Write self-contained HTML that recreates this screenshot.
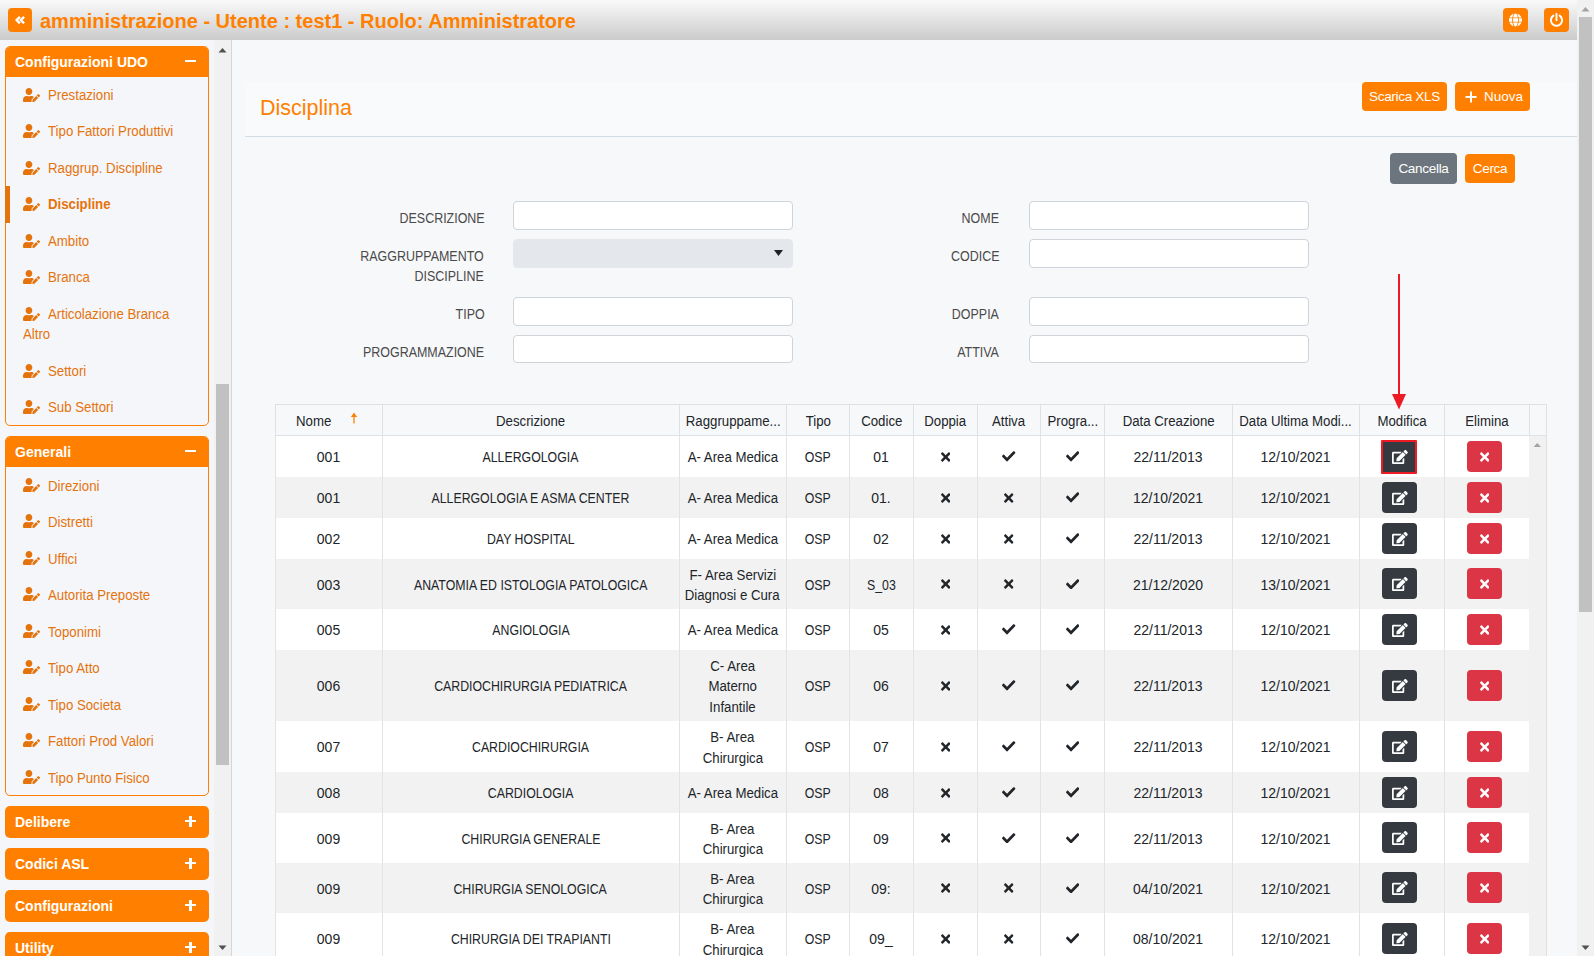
<!DOCTYPE html>
<html><head><meta charset="utf-8">
<style>
*{box-sizing:border-box;margin:0;padding:0}
html,body{width:1594px;height:956px;overflow:hidden;background:#f7f8fa;font-family:"Liberation Sans",sans-serif;color:#212529}
.abs{position:absolute}
svg.abs{display:block}
#hdr{position:absolute;left:0;top:0;width:1577px;height:40px;background:linear-gradient(#fafafa,#cbcbcb)}
.obtn{position:absolute;background:#ff8000;border-radius:4px}
#title{position:absolute;left:40px;top:9px;font-weight:bold;font-size:20px;line-height:24px;color:#ff8000;white-space:nowrap}
#vscroll{position:absolute;left:1577px;top:0;width:17px;height:956px;background:#f1f1f1}
#vthumb{position:absolute;left:2px;top:17px;width:13px;height:595px;background:#c1c1c1}
.arr{position:absolute;display:block}
#side{position:absolute;left:0;top:40px;width:231px;height:916px;background:#f5f6fa}
#sscroll{position:absolute;left:214px;top:40px;width:17px;height:916px;background:#f1f1f1}
#sthumb{position:absolute;left:2px;top:344px;width:13px;height:381px;background:#c1c1c1}
#sline{position:absolute;left:231px;top:40px;width:1px;height:916px;background:#d6d6d6}
.panel{position:absolute;left:5px;width:204px;border:1px solid #ff8000;border-radius:5px;background:#f5f6fa;overflow:hidden}
.ph{position:absolute;left:-1px;top:-1px;width:204px;height:31px;background:#ff8000;color:#fff;font-weight:bold;font-size:14px;line-height:33px;padding-left:10px;white-space:nowrap}
.sg{position:absolute;right:13px;top:14px;width:11px;height:2.4px;background:#fff}
.pl::after{content:"";position:absolute;left:4.3px;top:-4.3px;width:2.4px;height:11px;background:#fff}
.cp{position:absolute;left:5px;width:204px;height:32px;background:#ff8000;border-radius:5px;color:#fff;font-weight:bold;font-size:14px;line-height:33px;padding-left:10px}
.it{position:absolute;left:17px;color:#e5730c;font-size:14px;line-height:20.5px;white-space:nowrap}
.it svg{position:absolute;left:6px;top:2px}
.it span{position:absolute;left:31px;top:0;transform:scaleX(0.945);transform-origin:left top}
.it.act span{font-weight:bold}
#tbox{position:absolute;left:245px;top:82px;width:1332px;height:55px;background:#f9fafb;border-bottom:1px solid #d3dce3}
#dtitle{position:absolute;left:260px;top:94.5px;font-size:22.5px;line-height:26px;color:#ff8000;transform:scaleX(0.955);transform-origin:left top}
.btn{position:absolute;color:#fff;font-size:13.5px;text-align:center;border-radius:4px;white-space:nowrap}
.lbl{position:absolute;color:#4a4a4a;font-size:14px;text-align:right;line-height:20px;white-space:nowrap;transform:scaleX(0.89);transform-origin:right top}
.inp{position:absolute;width:280px;height:29px;background:#fff;border:1px solid #cfd4da;border-radius:4px}
.inp.sel{background:#e4e7eb;border-color:#e4e7eb}
#thead{position:absolute;left:275px;top:404px;width:1272px;height:32px;background:#f7f8fa;border:1px solid #dee2e6;border-top-color:#e0e0e0}
.th{position:absolute;top:405px;height:30px;line-height:32px;text-align:center;font-size:14px;color:#212529;white-space:nowrap;border-left:1px solid #dee2e6}
#tscroll{position:absolute;left:1529px;top:436px;width:18px;height:520px;background:#f1f1f1;border-right:1px solid #e0e0e0}
.td{position:absolute;text-align:center;font-size:14px;line-height:20.25px;color:#212529;white-space:nowrap}
.ebtn{left:1382px;width:35px;height:31px;background:#343a40;border-radius:4px}
.dbtn{left:1467px;width:35px;height:31px;background:#dc3545;border-radius:4px}

</style></head><body>
<div id="hdr"></div>
<div class="obtn" style="left:8px;top:8px;width:24px;height:24px"><svg width="24" height="24" viewBox="0 0 24 24" style="position:absolute;left:0;top:0"><path d="M11.9 8.9L8.6 12.1l3.3 3.2M16.1 8.9L12.8 12.1l3.3 3.2" fill="none" stroke="#fff" stroke-width="2.3"/></svg></div>
<div id="title">amministrazione - Utente : test1 - Ruolo: Amministratore</div>
<div class="obtn" style="left:1503px;top:8px;width:25px;height:24px"><svg width="13" height="14" viewBox="0 0 496 512" style="position:absolute;left:6px;top:5px"><path fill="#fff" d="M336.5 160C322 70.7 287.8 8 248 8s-74 62.7-88.5 152h177zM152 256c0 22.2 1.2 43.5 3.3 64h185.3c2.1-20.5 3.3-41.8 3.3-64s-1.2-43.5-3.3-64H155.3c-2.1 20.5-3.3 41.8-3.3 64zm324.7-96c-28.6-67.9-86.5-120.4-158-141.6 24.4 33.8 41.2 84.7 50 141.6h108zM177.2 18.4C105.8 39.6 47.8 92.1 19.3 160h108c8.7-56.9 25.5-107.8 49.9-141.6zM487.4 192H372.7c2.1 21 3.3 42.5 3.3 64s-1.200 43-3.3 64h114.6c5.5-20.5 8.6-41.8 8.6-64s-3.1-43.5-8.5-64zM120 256c0-21.5 1.2-43 3.3-64H8.6C3.2 212.5 0 233.8 0 256s3.2 43.5 8.6 64h114.6c-2-21-3.2-42.5-3.2-64zm39.5 96c14.5 89.3 48.7 152 88.5 152s74-62.7 88.5-152h-177zm159.3 141.6c71.4-21.2 129.4-73.7 158-141.6h-108c-8.8 56.9-25.6 107.8-50 141.6zM19.3 352c28.6 67.9 86.5 120.4 158 141.6-24.4-33.8-41.2-84.7-50-141.6h-108z"/></svg></div>
<div class="obtn" style="left:1544px;top:8px;width:25px;height:24px"><svg width="25" height="24" viewBox="0 0 25 24" style="position:absolute;left:0;top:0"><path d="M9.35 7.6A5.6 5.6 0 1 0 15.65 7.6" fill="none" stroke="#fff" stroke-width="2" stroke-linecap="round"/><path d="M12.5 5.7V12.2" stroke="#fff" stroke-width="1.9" stroke-linecap="round"/></svg></div>
<div id="vscroll"><div id="vthumb"></div><svg class="arr" style="left:4px;top:6px" width="9" height="6"><path d="M0.5 5.5L4.5 1 8.5 5.5z" fill="#a3a3a3"/></svg><svg class="arr" style="left:4px;top:945px" width="9" height="6"><path d="M0.5 0.5L4.5 5 8.5 0.5z" fill="#505050"/></svg></div>
<div id="side"></div>
<div id="sscroll"><div id="sthumb"></div><svg class="arr" style="left:4px;top:7px" width="9" height="6"><path d="M0.5 5.5L4.5 1 8.5 5.5z" fill="#505050"/></svg><svg class="arr" style="left:4px;top:905px" width="9" height="6"><path d="M0.5 0.5L4.5 5 8.5 0.5z" fill="#505050"/></svg></div>
<div id="sline"></div>
<div class="panel" style="top:46px;height:380px"><div class="ph">Configurazioni UDO<span class="sg mi"></span></div></div>
<div class="it" style="top:85.50px"><svg width="17" height="14" viewBox="0 0 640 512" preserveAspectRatio="none"><path fill="#e5730c" d="M224 256c70.7 0 128-57.3 128-128S294.7 0 224 0 96 57.3 96 128s57.3 128 128 128zm89.6 32h-16.7c-22.2 10.2-46.9 16-72.9 16s-50.6-5.8-72.9-16h-16.7C60.2 288 0 348.2 0 422.4V464c0 26.5 21.5 48 48 48h274.9c-2.4-6.8-3.4-14-2.6-21.3l6.8-60.9 1.2-11.1 7.9-7.9 77.3-77.3c-24.5-27.7-60-45.5-99.9-45.5zm45.3 145.3l-6.8 61c-1.1 10.2 7.5 18.8 17.6 17.6l60.9-6.8 137.9-137.9-71.7-71.7-137.9 137.8zM633 268.9L595.1 231c-9.3-9.3-24.5-9.3-33.8 0l-37.8 37.8-4.1 4.1 71.8 71.7 41.8-41.8c9.3-9.4 9.3-24.5 0-33.9z"/></svg><span style="top:-1px">Prestazioni</span></div>
<div class="it" style="top:122.00px"><svg width="17" height="14" viewBox="0 0 640 512" preserveAspectRatio="none"><path fill="#e5730c" d="M224 256c70.7 0 128-57.3 128-128S294.7 0 224 0 96 57.3 96 128s57.3 128 128 128zm89.6 32h-16.7c-22.2 10.2-46.9 16-72.9 16s-50.6-5.8-72.9-16h-16.7C60.2 288 0 348.2 0 422.4V464c0 26.5 21.5 48 48 48h274.9c-2.4-6.8-3.4-14-2.6-21.3l6.8-60.9 1.2-11.1 7.9-7.9 77.3-77.3c-24.5-27.7-60-45.5-99.9-45.5zm45.3 145.3l-6.8 61c-1.1 10.2 7.5 18.8 17.6 17.6l60.9-6.8 137.9-137.9-71.7-71.7-137.9 137.8zM633 268.9L595.1 231c-9.3-9.3-24.5-9.3-33.8 0l-37.8 37.8-4.1 4.1 71.8 71.7 41.8-41.8c9.3-9.4 9.3-24.5 0-33.9z"/></svg><span style="top:-1px">Tipo Fattori Produttivi</span></div>
<div class="it" style="top:158.50px"><svg width="17" height="14" viewBox="0 0 640 512" preserveAspectRatio="none"><path fill="#e5730c" d="M224 256c70.7 0 128-57.3 128-128S294.7 0 224 0 96 57.3 96 128s57.3 128 128 128zm89.6 32h-16.7c-22.2 10.2-46.9 16-72.9 16s-50.6-5.8-72.9-16h-16.7C60.2 288 0 348.2 0 422.4V464c0 26.5 21.5 48 48 48h274.9c-2.4-6.8-3.4-14-2.6-21.3l6.8-60.9 1.2-11.1 7.9-7.9 77.3-77.3c-24.5-27.7-60-45.5-99.9-45.5zm45.3 145.3l-6.8 61c-1.1 10.2 7.5 18.8 17.6 17.6l60.9-6.8 137.9-137.9-71.7-71.7-137.9 137.8zM633 268.9L595.1 231c-9.3-9.3-24.5-9.3-33.8 0l-37.8 37.8-4.1 4.1 71.8 71.7 41.8-41.8c9.3-9.4 9.3-24.5 0-33.9z"/></svg><span style="top:-1px">Raggrup. Discipline</span></div>
<div class="it act" style="top:195.00px"><svg width="17" height="14" viewBox="0 0 640 512" preserveAspectRatio="none"><path fill="#e5730c" d="M224 256c70.7 0 128-57.3 128-128S294.7 0 224 0 96 57.3 96 128s57.3 128 128 128zm89.6 32h-16.7c-22.2 10.2-46.9 16-72.9 16s-50.6-5.8-72.9-16h-16.7C60.2 288 0 348.2 0 422.4V464c0 26.5 21.5 48 48 48h274.9c-2.4-6.8-3.4-14-2.6-21.3l6.8-60.9 1.2-11.1 7.9-7.9 77.3-77.3c-24.5-27.7-60-45.5-99.9-45.5zm45.3 145.3l-6.8 61c-1.1 10.2 7.5 18.8 17.6 17.6l60.9-6.8 137.9-137.9-71.7-71.7-137.9 137.8zM633 268.9L595.1 231c-9.3-9.3-24.5-9.3-33.8 0l-37.8 37.8-4.1 4.1 71.8 71.7 41.8-41.8c9.3-9.4 9.3-24.5 0-33.9z"/></svg><span style="top:-1px">Discipline</span></div>
<div class="abs" style="left:5px;top:186.00px;width:5px;height:37px;background:#e5730c"></div>
<div class="it" style="top:231.50px"><svg width="17" height="14" viewBox="0 0 640 512" preserveAspectRatio="none"><path fill="#e5730c" d="M224 256c70.7 0 128-57.3 128-128S294.7 0 224 0 96 57.3 96 128s57.3 128 128 128zm89.6 32h-16.7c-22.2 10.2-46.9 16-72.9 16s-50.6-5.8-72.9-16h-16.7C60.2 288 0 348.2 0 422.4V464c0 26.5 21.5 48 48 48h274.9c-2.4-6.8-3.4-14-2.6-21.3l6.8-60.9 1.2-11.1 7.9-7.9 77.3-77.3c-24.5-27.7-60-45.5-99.9-45.5zm45.3 145.3l-6.8 61c-1.1 10.2 7.5 18.8 17.6 17.6l60.9-6.8 137.9-137.9-71.7-71.7-137.9 137.8zM633 268.9L595.1 231c-9.3-9.3-24.5-9.3-33.8 0l-37.8 37.8-4.1 4.1 71.8 71.7 41.8-41.8c9.3-9.4 9.3-24.5 0-33.9z"/></svg><span style="top:-1px">Ambito</span></div>
<div class="it" style="top:268.00px"><svg width="17" height="14" viewBox="0 0 640 512" preserveAspectRatio="none"><path fill="#e5730c" d="M224 256c70.7 0 128-57.3 128-128S294.7 0 224 0 96 57.3 96 128s57.3 128 128 128zm89.6 32h-16.7c-22.2 10.2-46.9 16-72.9 16s-50.6-5.8-72.9-16h-16.7C60.2 288 0 348.2 0 422.4V464c0 26.5 21.5 48 48 48h274.9c-2.4-6.8-3.4-14-2.6-21.3l6.8-60.9 1.2-11.1 7.9-7.9 77.3-77.3c-24.5-27.7-60-45.5-99.9-45.5zm45.3 145.3l-6.8 61c-1.1 10.2 7.5 18.8 17.6 17.6l60.9-6.8 137.9-137.9-71.7-71.7-137.9 137.8zM633 268.9L595.1 231c-9.3-9.3-24.5-9.3-33.8 0l-37.8 37.8-4.1 4.1 71.8 71.7 41.8-41.8c9.3-9.4 9.3-24.5 0-33.9z"/></svg><span style="top:-1px">Branca</span></div>
<div class="it" style="top:304.50px"><svg width="17" height="14" viewBox="0 0 640 512" preserveAspectRatio="none"><path fill="#e5730c" d="M224 256c70.7 0 128-57.3 128-128S294.7 0 224 0 96 57.3 96 128s57.3 128 128 128zm89.6 32h-16.7c-22.2 10.2-46.9 16-72.9 16s-50.6-5.8-72.9-16h-16.7C60.2 288 0 348.2 0 422.4V464c0 26.5 21.5 48 48 48h274.9c-2.4-6.8-3.4-14-2.6-21.3l6.8-60.9 1.2-11.1 7.9-7.9 77.3-77.3c-24.5-27.7-60-45.5-99.9-45.5zm45.3 145.3l-6.8 61c-1.1 10.2 7.5 18.8 17.6 17.6l60.9-6.8 137.9-137.9-71.7-71.7-137.9 137.8zM633 268.9L595.1 231c-9.3-9.3-24.5-9.3-33.8 0l-37.8 37.8-4.1 4.1 71.8 71.7 41.8-41.8c9.3-9.4 9.3-24.5 0-33.9z"/></svg><span style="top:-1px">Articolazione Branca</span><span style="left:6px;top:19.5px">Altro</span></div>
<div class="it" style="top:361.50px"><svg width="17" height="14" viewBox="0 0 640 512" preserveAspectRatio="none"><path fill="#e5730c" d="M224 256c70.7 0 128-57.3 128-128S294.7 0 224 0 96 57.3 96 128s57.3 128 128 128zm89.6 32h-16.7c-22.2 10.2-46.9 16-72.9 16s-50.6-5.8-72.9-16h-16.7C60.2 288 0 348.2 0 422.4V464c0 26.5 21.5 48 48 48h274.9c-2.4-6.8-3.4-14-2.6-21.3l6.8-60.9 1.2-11.1 7.9-7.9 77.3-77.3c-24.5-27.7-60-45.5-99.9-45.5zm45.3 145.3l-6.8 61c-1.1 10.2 7.5 18.8 17.6 17.6l60.9-6.8 137.9-137.9-71.7-71.7-137.9 137.8zM633 268.9L595.1 231c-9.3-9.3-24.5-9.3-33.8 0l-37.8 37.8-4.1 4.1 71.8 71.7 41.8-41.8c9.3-9.4 9.3-24.5 0-33.9z"/></svg><span style="top:-1px">Settori</span></div>
<div class="it" style="top:398.00px"><svg width="17" height="14" viewBox="0 0 640 512" preserveAspectRatio="none"><path fill="#e5730c" d="M224 256c70.7 0 128-57.3 128-128S294.7 0 224 0 96 57.3 96 128s57.3 128 128 128zm89.6 32h-16.7c-22.2 10.2-46.9 16-72.9 16s-50.6-5.8-72.9-16h-16.7C60.2 288 0 348.2 0 422.4V464c0 26.5 21.5 48 48 48h274.9c-2.4-6.8-3.4-14-2.6-21.3l6.8-60.9 1.2-11.1 7.9-7.9 77.3-77.3c-24.5-27.7-60-45.5-99.9-45.5zm45.3 145.3l-6.8 61c-1.1 10.2 7.5 18.8 17.6 17.6l60.9-6.8 137.9-137.9-71.7-71.7-137.9 137.8zM633 268.9L595.1 231c-9.3-9.3-24.5-9.3-33.8 0l-37.8 37.8-4.1 4.1 71.8 71.7 41.8-41.8c9.3-9.4 9.3-24.5 0-33.9z"/></svg><span style="top:-1px">Sub Settori</span></div>
<div class="panel" style="top:436px;height:360px"><div class="ph">Generali<span class="sg mi"></span></div></div>
<div class="it" style="top:475.50px"><svg width="17" height="14" viewBox="0 0 640 512" preserveAspectRatio="none"><path fill="#e5730c" d="M224 256c70.7 0 128-57.3 128-128S294.7 0 224 0 96 57.3 96 128s57.3 128 128 128zm89.6 32h-16.7c-22.2 10.2-46.9 16-72.9 16s-50.6-5.8-72.9-16h-16.7C60.2 288 0 348.2 0 422.4V464c0 26.5 21.5 48 48 48h274.9c-2.4-6.8-3.4-14-2.6-21.3l6.8-60.9 1.2-11.1 7.9-7.9 77.3-77.3c-24.5-27.7-60-45.5-99.9-45.5zm45.3 145.3l-6.8 61c-1.1 10.2 7.5 18.8 17.6 17.6l60.9-6.8 137.9-137.9-71.7-71.7-137.9 137.8zM633 268.9L595.1 231c-9.3-9.3-24.5-9.3-33.8 0l-37.8 37.8-4.1 4.1 71.8 71.7 41.8-41.8c9.3-9.4 9.3-24.5 0-33.9z"/></svg><span style="top:0px">Direzioni</span></div>
<div class="it" style="top:512.00px"><svg width="17" height="14" viewBox="0 0 640 512" preserveAspectRatio="none"><path fill="#e5730c" d="M224 256c70.7 0 128-57.3 128-128S294.7 0 224 0 96 57.3 96 128s57.3 128 128 128zm89.6 32h-16.7c-22.2 10.2-46.9 16-72.9 16s-50.6-5.8-72.9-16h-16.7C60.2 288 0 348.2 0 422.4V464c0 26.5 21.5 48 48 48h274.9c-2.4-6.8-3.4-14-2.6-21.3l6.8-60.9 1.2-11.1 7.9-7.9 77.3-77.3c-24.5-27.7-60-45.5-99.9-45.5zm45.3 145.3l-6.8 61c-1.1 10.2 7.5 18.8 17.6 17.6l60.9-6.8 137.9-137.9-71.7-71.7-137.9 137.8zM633 268.9L595.1 231c-9.3-9.3-24.5-9.3-33.8 0l-37.8 37.8-4.1 4.1 71.8 71.7 41.8-41.8c9.3-9.4 9.3-24.5 0-33.9z"/></svg><span style="top:0px">Distretti</span></div>
<div class="it" style="top:548.50px"><svg width="17" height="14" viewBox="0 0 640 512" preserveAspectRatio="none"><path fill="#e5730c" d="M224 256c70.7 0 128-57.3 128-128S294.7 0 224 0 96 57.3 96 128s57.3 128 128 128zm89.6 32h-16.7c-22.2 10.2-46.9 16-72.9 16s-50.6-5.8-72.9-16h-16.7C60.2 288 0 348.2 0 422.4V464c0 26.5 21.5 48 48 48h274.9c-2.4-6.8-3.4-14-2.6-21.3l6.8-60.9 1.2-11.1 7.9-7.9 77.3-77.3c-24.5-27.7-60-45.5-99.9-45.5zm45.3 145.3l-6.8 61c-1.1 10.2 7.5 18.8 17.6 17.6l60.9-6.8 137.9-137.9-71.7-71.7-137.9 137.8zM633 268.9L595.1 231c-9.3-9.3-24.5-9.3-33.8 0l-37.8 37.8-4.1 4.1 71.8 71.7 41.8-41.8c9.3-9.4 9.3-24.5 0-33.9z"/></svg><span style="top:0px">Uffici</span></div>
<div class="it" style="top:585.00px"><svg width="17" height="14" viewBox="0 0 640 512" preserveAspectRatio="none"><path fill="#e5730c" d="M224 256c70.7 0 128-57.3 128-128S294.7 0 224 0 96 57.3 96 128s57.3 128 128 128zm89.6 32h-16.7c-22.2 10.2-46.9 16-72.9 16s-50.6-5.8-72.9-16h-16.7C60.2 288 0 348.2 0 422.4V464c0 26.5 21.5 48 48 48h274.9c-2.4-6.8-3.4-14-2.6-21.3l6.8-60.9 1.2-11.1 7.9-7.9 77.3-77.3c-24.5-27.7-60-45.5-99.9-45.5zm45.3 145.3l-6.8 61c-1.1 10.2 7.5 18.8 17.6 17.6l60.9-6.8 137.9-137.9-71.7-71.7-137.9 137.8zM633 268.9L595.1 231c-9.3-9.3-24.5-9.3-33.8 0l-37.8 37.8-4.1 4.1 71.8 71.7 41.8-41.8c9.3-9.4 9.3-24.5 0-33.9z"/></svg><span style="top:0px">Autorita Preposte</span></div>
<div class="it" style="top:621.50px"><svg width="17" height="14" viewBox="0 0 640 512" preserveAspectRatio="none"><path fill="#e5730c" d="M224 256c70.7 0 128-57.3 128-128S294.7 0 224 0 96 57.3 96 128s57.3 128 128 128zm89.6 32h-16.7c-22.2 10.2-46.9 16-72.9 16s-50.6-5.8-72.9-16h-16.7C60.2 288 0 348.2 0 422.4V464c0 26.5 21.5 48 48 48h274.9c-2.4-6.8-3.4-14-2.6-21.3l6.8-60.9 1.2-11.1 7.9-7.9 77.3-77.3c-24.5-27.7-60-45.5-99.9-45.5zm45.3 145.3l-6.8 61c-1.1 10.2 7.5 18.8 17.6 17.6l60.9-6.8 137.9-137.9-71.7-71.7-137.9 137.8zM633 268.9L595.1 231c-9.3-9.3-24.5-9.3-33.8 0l-37.8 37.8-4.1 4.1 71.8 71.7 41.8-41.8c9.3-9.4 9.3-24.5 0-33.9z"/></svg><span style="top:0px">Toponimi</span></div>
<div class="it" style="top:658.00px"><svg width="17" height="14" viewBox="0 0 640 512" preserveAspectRatio="none"><path fill="#e5730c" d="M224 256c70.7 0 128-57.3 128-128S294.7 0 224 0 96 57.3 96 128s57.3 128 128 128zm89.6 32h-16.7c-22.2 10.2-46.9 16-72.9 16s-50.6-5.8-72.9-16h-16.7C60.2 288 0 348.2 0 422.4V464c0 26.5 21.5 48 48 48h274.9c-2.4-6.8-3.4-14-2.6-21.3l6.8-60.9 1.2-11.1 7.9-7.9 77.3-77.3c-24.5-27.7-60-45.5-99.9-45.5zm45.3 145.3l-6.8 61c-1.1 10.2 7.5 18.8 17.6 17.6l60.9-6.8 137.9-137.9-71.7-71.7-137.9 137.8zM633 268.9L595.1 231c-9.3-9.3-24.5-9.3-33.8 0l-37.8 37.8-4.1 4.1 71.8 71.7 41.8-41.8c9.3-9.4 9.3-24.5 0-33.9z"/></svg><span style="top:0px">Tipo Atto</span></div>
<div class="it" style="top:694.50px"><svg width="17" height="14" viewBox="0 0 640 512" preserveAspectRatio="none"><path fill="#e5730c" d="M224 256c70.7 0 128-57.3 128-128S294.7 0 224 0 96 57.3 96 128s57.3 128 128 128zm89.6 32h-16.7c-22.2 10.2-46.9 16-72.9 16s-50.6-5.8-72.9-16h-16.7C60.2 288 0 348.2 0 422.4V464c0 26.5 21.5 48 48 48h274.9c-2.4-6.8-3.4-14-2.6-21.3l6.8-60.9 1.2-11.1 7.9-7.9 77.3-77.3c-24.5-27.7-60-45.5-99.9-45.5zm45.3 145.3l-6.8 61c-1.1 10.2 7.5 18.8 17.6 17.6l60.9-6.8 137.9-137.9-71.7-71.7-137.9 137.8zM633 268.9L595.1 231c-9.3-9.3-24.5-9.3-33.8 0l-37.8 37.8-4.1 4.1 71.8 71.7 41.8-41.8c9.3-9.4 9.3-24.5 0-33.9z"/></svg><span style="top:0px">Tipo Societa</span></div>
<div class="it" style="top:731.00px"><svg width="17" height="14" viewBox="0 0 640 512" preserveAspectRatio="none"><path fill="#e5730c" d="M224 256c70.7 0 128-57.3 128-128S294.7 0 224 0 96 57.3 96 128s57.3 128 128 128zm89.6 32h-16.7c-22.2 10.2-46.9 16-72.9 16s-50.6-5.8-72.9-16h-16.7C60.2 288 0 348.2 0 422.4V464c0 26.5 21.5 48 48 48h274.9c-2.4-6.8-3.4-14-2.6-21.3l6.8-60.9 1.2-11.1 7.9-7.9 77.3-77.3c-24.5-27.7-60-45.5-99.9-45.5zm45.3 145.3l-6.8 61c-1.1 10.2 7.5 18.8 17.6 17.6l60.9-6.8 137.9-137.9-71.7-71.7-137.9 137.8zM633 268.9L595.1 231c-9.3-9.3-24.5-9.3-33.8 0l-37.8 37.8-4.1 4.1 71.8 71.7 41.8-41.8c9.3-9.4 9.3-24.5 0-33.9z"/></svg><span style="top:0px">Fattori Prod Valori</span></div>
<div class="it" style="top:767.50px"><svg width="17" height="14" viewBox="0 0 640 512" preserveAspectRatio="none"><path fill="#e5730c" d="M224 256c70.7 0 128-57.3 128-128S294.7 0 224 0 96 57.3 96 128s57.3 128 128 128zm89.6 32h-16.7c-22.2 10.2-46.9 16-72.9 16s-50.6-5.8-72.9-16h-16.7C60.2 288 0 348.2 0 422.4V464c0 26.5 21.5 48 48 48h274.9c-2.4-6.8-3.4-14-2.6-21.3l6.8-60.9 1.2-11.1 7.9-7.9 77.3-77.3c-24.5-27.7-60-45.5-99.9-45.5zm45.3 145.3l-6.8 61c-1.1 10.2 7.5 18.8 17.6 17.6l60.9-6.8 137.9-137.9-71.7-71.7-137.9 137.8zM633 268.9L595.1 231c-9.3-9.3-24.5-9.3-33.8 0l-37.8 37.8-4.1 4.1 71.8 71.7 41.8-41.8c9.3-9.4 9.3-24.5 0-33.9z"/></svg><span style="top:0px">Tipo Punto Fisico</span></div>
<div class="cp" style="top:806px">Delibere<span class="sg pl"></span></div>
<div class="cp" style="top:848px">Codici ASL<span class="sg pl"></span></div>
<div class="cp" style="top:890px">Configurazioni<span class="sg pl"></span></div>
<div class="cp" style="top:932px">Utility<span class="sg pl"></span></div>
<div id="tbox"></div>
<div id="dtitle">Disciplina</div>
<div class="btn" style="left:1362px;top:82px;width:85px;height:29px;line-height:29px;background:#ff8000;letter-spacing:-0.3px">Scarica XLS</div>
<div class="btn" style="left:1455px;top:82px;width:75px;height:29px;line-height:29px;background:#ff8000"><svg width="12" height="12" viewBox="0 0 12 12" style="position:absolute;left:10px;top:8.5px"><path d="M6 0.5V11.5M0.5 6H11.5" stroke="#fff" stroke-width="2"/></svg><span style="position:absolute;left:29px;top:0">Nuova</span></div>
<div class="btn" style="left:1390px;top:153px;width:67px;height:31px;line-height:31px;background:#6c757d;letter-spacing:-0.3px">Cancella</div>
<div class="btn" style="left:1465px;top:154px;width:50px;height:29px;line-height:29px;background:#ff8000;letter-spacing:-0.3px">Cerca</div>
<div class="lbl" style="right:1109.8px;top:208px">DESCRIZIONE</div>
<div class="lbl" style="right:1109.8px;top:246px">RAGGRUPPAMENTO<br>DISCIPLINE</div>
<div class="lbl" style="right:1109.8px;top:304px">TIPO</div>
<div class="lbl" style="right:1109.8px;top:342px">PROGRAMMAZIONE</div>
<div class="lbl" style="right:594.8px;top:208px">NOME</div>
<div class="lbl" style="right:594.8px;top:246px">CODICE</div>
<div class="lbl" style="right:594.8px;top:304px">DOPPIA</div>
<div class="lbl" style="right:594.8px;top:342px">ATTIVA</div>
<div class="inp" style="left:513px;top:201px;height:29px"></div>
<div class="inp" style="left:513px;top:297px;height:29px"></div>
<div class="inp" style="left:513px;top:335px;height:28px"></div>
<div class="inp" style="left:1029px;top:201px;height:29px"></div>
<div class="inp" style="left:1029px;top:297px;height:29px"></div>
<div class="inp" style="left:1029px;top:335px;height:28px"></div>
<div class="inp" style="left:1029px;top:239px"></div>
<div class="inp sel" style="left:513px;top:239px"><svg width="9" height="6" style="position:absolute;left:260px;top:10px"><path d="M0 0H9L4.5 6z" fill="#222"/></svg></div>
<div class="abs" style="left:1398px;top:274px;width:2px;height:122px;background:#ed1c24;z-index:5"></div>
<svg class="abs" style="left:1391px;top:393px;z-index:5" width="16" height="17"><path d="M1 1H15L8 16.5z" fill="#ed1c24"/></svg>
<div id="thead"></div>
<div class="th" style="left:275px;width:107px;text-align:left;padding-left:18.5px"><span style="display:inline-block;transform:scaleX(0.945)">Nome</span></div>
<svg class="abs" style="left:350px;top:412px" width="8" height="12"><path d="M4 1.5V11.5" stroke="#ff8000" stroke-width="1.3"/><path d="M0.8 5L4 0.8 7.2 5z" fill="#ff8000"/></svg>
<div class="th" style="left:382px;width:297px"><span style="display:inline-block;transform:scaleX(0.945)">Descrizione</span></div>
<div class="th" style="left:679px;width:107px"><span style="display:inline-block;transform:scaleX(0.945)">Raggruppame...</span></div>
<div class="th" style="left:786px;width:63px"><span style="display:inline-block;transform:scaleX(0.945)">Tipo</span></div>
<div class="th" style="left:849px;width:64px"><span style="display:inline-block;transform:scaleX(0.945)">Codice</span></div>
<div class="th" style="left:913px;width:64px"><span style="display:inline-block;transform:scaleX(0.945)">Doppia</span></div>
<div class="th" style="left:977px;width:63px"><span style="display:inline-block;transform:scaleX(0.945)">Attiva</span></div>
<div class="th" style="left:1040px;width:64px"><span style="display:inline-block;transform:scaleX(0.945)">Progra...</span></div>
<div class="th" style="left:1104px;width:128px"><span style="display:inline-block;transform:scaleX(0.945)">Data Creazione</span></div>
<div class="th" style="left:1232px;width:127px"><span style="display:inline-block;transform:scaleX(0.945)">Data Ultima Modi...</span></div>
<div class="th" style="left:1359px;width:85px"><span style="display:inline-block;transform:scaleX(0.945)">Modifica</span></div>
<div class="th" style="left:1444px;width:85px"><span style="display:inline-block;transform:scaleX(0.945)">Elimina</span></div>
<div class="th" style="left:1529px;width:17px"></div>
<div id="tscroll"><svg class="arr" style="left:3.7px;top:5.7px" width="9" height="6"><path d="M0.5 5L4.25 1 8 5z" fill="#a3a3a3"/></svg></div>
<div class="abs" style="left:276px;top:436px;width:1253px;height:41px;background:#ffffff"></div>
<div class="td" style="left:275px;width:107px;top:447.38px"><span style="display:inline-block;transform:scaleX(1.0)">001</span></div>
<div class="td" style="left:382px;width:297px;top:447.38px"><span style="display:inline-block;transform:scaleX(0.88)">ALLERGOLOGIA</span></div>
<div class="td" style="left:679px;width:107px;top:447.38px"><span style="display:inline-block;transform:scaleX(0.945)">A- Area Medica</span></div>
<div class="td" style="left:786px;width:63px;top:447.38px"><span style="display:inline-block;transform:scaleX(0.88)">OSP</span></div>
<div class="td" style="left:849px;width:64px;top:447.38px"><span style="display:inline-block;transform:scaleX(1.0)">01</span></div>
<svg class="abs" style="left:940.8px;top:451.5px" width="9.4" height="10" viewBox="0 80 352 352"><path fill="#212529" d="M242.72 256l100.07-100.07c12.28-12.28 12.28-32.19 0-44.48l-22.24-22.24c-12.28-12.28-32.19-12.28-44.48 0L176 189.28 75.93 89.21c-12.28-12.28-32.19-12.28-44.48 0L9.21 111.45c-12.28 12.28-12.28 32.19 0 44.48L109.28 256 9.21 356.07c-12.28 12.28-12.280 32.19 0 44.48l22.24 22.24c12.28 12.28 32.2 12.28 44.48 0L176 322.72l100.07 100.07c12.28 12.28 32.2 12.28 44.48 0l22.24-22.24c12.28-12.28 12.28-32.19 0-44.48L242.72 256z"/></svg><svg class="abs" style="left:1002.3px;top:451.2px" width="13.4" height="10.6" viewBox="0 60 512 392" preserveAspectRatio="none"><path fill="#212529" d="M173.898 439.404l-166.4-166.4c-9.997-9.997-9.997-26.206 0-36.204l36.203-36.204c9.997-9.998 26.207-9.998 36.204 0L192 312.69 432.095 72.596c9.997-9.997 26.207-9.997 36.204 0l36.203 36.204c9.997 9.997 9.997 26.206 0 36.204l-294.4 294.401c-9.998 9.997-26.207 9.997-36.204-.001z"/></svg><svg class="abs" style="left:1065.8px;top:451.2px" width="13.4" height="10.6" viewBox="0 60 512 392" preserveAspectRatio="none"><path fill="#212529" d="M173.898 439.404l-166.4-166.4c-9.997-9.997-9.997-26.206 0-36.204l36.203-36.204c9.997-9.998 26.207-9.998 36.204 0L192 312.69 432.095 72.596c9.997-9.997 26.207-9.997 36.204 0l36.203 36.204c9.997 9.997 9.997 26.206 0 36.204l-294.4 294.401c-9.998 9.997-26.207 9.997-36.204-.001z"/></svg><div class="td" style="left:1104px;width:128px;top:447.38px"><span style="display:inline-block;transform:scaleX(1.0)">22/11/2013</span></div>
<div class="td" style="left:1232px;width:127px;top:447.38px"><span style="display:inline-block;transform:scaleX(1.0)">12/10/2021</span></div>
<div class="abs" style="left:1381px;top:440px;width:36px;height:34px;background:#343a40;border:2px solid #ed1c24;border-radius:1px"></div>
<svg class="abs" style="left:1392px;top:450px" width="15.75" height="14" viewBox="0 0 576 512"><path fill="#fff" d="M402.6 83.2l90.2 90.2c3.8 3.8 3.8 10 0 13.8L274.4 405.6l-92.8 10.3c-12.4 1.4-22.9-9.1-21.5-21.5l10.3-92.8L388.8 83.2c3.8-3.8 10-3.8 13.8 0zm162-22.9l-48.8-48.8c-15.2-15.2-39.9-15.2-55.200 0l-35.4 35.4c-3.8 3.8-3.8 10 0 13.8l90.2 90.2c3.8 3.8 10 3.8 13.8 0l35.4-35.4c15.2-15.3 15.2-40 0-55.2zM384 346.2V448H64V128h229.8c3.2 0 6.2-1.3 8.5-3.5l40-40c7.6-7.6 2.2-20.5-8.5-20.5H48C21.5 64 0 85.5 0 112v352c0 26.5 21.5 48 48 48h352c26.5 0 48-21.5 48-48V306.2c0-10.7-12.9-16-20.5-8.5l-40 40c-2.2 2.3-3.5 5.3-3.5 8.5z"/></svg>
<div class="abs dbtn" style="top:441px"><svg width="9.4" height="10" viewBox="0 80 352 352" style="position:absolute;left:12.8px;top:10.5px"><path fill="#fff" d="M242.72 256l100.07-100.07c12.28-12.28 12.28-32.19 0-44.48l-22.24-22.24c-12.28-12.28-32.19-12.28-44.48 0L176 189.28 75.93 89.21c-12.28-12.28-32.19-12.28-44.48 0L9.21 111.45c-12.28 12.28-12.28 32.19 0 44.48L109.28 256 9.21 356.07c-12.28 12.28-12.280 32.19 0 44.48l22.24 22.24c12.28 12.28 32.2 12.28 44.48 0L176 322.72l100.07 100.07c12.28 12.28 32.2 12.28 44.48 0l22.24-22.24c12.28-12.28 12.28-32.19 0-44.48L242.72 256z"/></svg></div>
<div class="abs" style="left:276px;top:477px;width:1253px;height:41px;background:#f2f2f2"></div>
<div class="td" style="left:275px;width:107px;top:488.38px"><span style="display:inline-block;transform:scaleX(1.0)">001</span></div>
<div class="td" style="left:382px;width:297px;top:488.38px"><span style="display:inline-block;transform:scaleX(0.88)">ALLERGOLOGIA E ASMA CENTER</span></div>
<div class="td" style="left:679px;width:107px;top:488.38px"><span style="display:inline-block;transform:scaleX(0.945)">A- Area Medica</span></div>
<div class="td" style="left:786px;width:63px;top:488.38px"><span style="display:inline-block;transform:scaleX(0.88)">OSP</span></div>
<div class="td" style="left:849px;width:64px;top:488.38px"><span style="display:inline-block;transform:scaleX(1.0)">01.</span></div>
<svg class="abs" style="left:940.8px;top:492.5px" width="9.4" height="10" viewBox="0 80 352 352"><path fill="#212529" d="M242.72 256l100.07-100.07c12.28-12.28 12.28-32.19 0-44.48l-22.24-22.24c-12.28-12.28-32.19-12.28-44.48 0L176 189.28 75.93 89.21c-12.28-12.28-32.19-12.28-44.48 0L9.21 111.45c-12.28 12.28-12.28 32.19 0 44.48L109.28 256 9.21 356.07c-12.28 12.28-12.280 32.19 0 44.48l22.24 22.24c12.28 12.28 32.2 12.28 44.48 0L176 322.72l100.07 100.07c12.28 12.28 32.2 12.28 44.48 0l22.24-22.24c12.28-12.28 12.28-32.19 0-44.48L242.72 256z"/></svg><svg class="abs" style="left:1004.3px;top:492.5px" width="9.4" height="10" viewBox="0 80 352 352"><path fill="#212529" d="M242.72 256l100.07-100.07c12.28-12.28 12.28-32.19 0-44.48l-22.24-22.24c-12.28-12.28-32.19-12.28-44.48 0L176 189.28 75.93 89.21c-12.28-12.28-32.19-12.28-44.48 0L9.21 111.45c-12.28 12.28-12.28 32.19 0 44.48L109.28 256 9.21 356.07c-12.28 12.28-12.280 32.19 0 44.48l22.24 22.24c12.28 12.28 32.2 12.28 44.48 0L176 322.72l100.07 100.07c12.28 12.28 32.2 12.28 44.48 0l22.24-22.24c12.28-12.28 12.28-32.19 0-44.48L242.72 256z"/></svg><svg class="abs" style="left:1065.8px;top:492.2px" width="13.4" height="10.6" viewBox="0 60 512 392" preserveAspectRatio="none"><path fill="#212529" d="M173.898 439.404l-166.4-166.4c-9.997-9.997-9.997-26.206 0-36.204l36.203-36.204c9.997-9.998 26.207-9.998 36.204 0L192 312.69 432.095 72.596c9.997-9.997 26.207-9.997 36.204 0l36.203 36.204c9.997 9.997 9.997 26.206 0 36.204l-294.4 294.401c-9.998 9.997-26.207 9.997-36.204-.001z"/></svg><div class="td" style="left:1104px;width:128px;top:488.38px"><span style="display:inline-block;transform:scaleX(1.0)">12/10/2021</span></div>
<div class="td" style="left:1232px;width:127px;top:488.38px"><span style="display:inline-block;transform:scaleX(1.0)">12/10/2021</span></div>
<div class="abs ebtn" style="top:482px"></div>
<svg class="abs" style="left:1392px;top:491px" width="15.75" height="14" viewBox="0 0 576 512"><path fill="#fff" d="M402.6 83.2l90.2 90.2c3.8 3.8 3.8 10 0 13.8L274.4 405.6l-92.8 10.3c-12.4 1.4-22.9-9.1-21.5-21.5l10.3-92.8L388.8 83.2c3.8-3.8 10-3.8 13.8 0zm162-22.9l-48.8-48.8c-15.2-15.2-39.9-15.2-55.200 0l-35.4 35.4c-3.8 3.8-3.8 10 0 13.8l90.2 90.2c3.8 3.8 10 3.8 13.8 0l35.4-35.4c15.2-15.3 15.2-40 0-55.2zM384 346.2V448H64V128h229.8c3.2 0 6.2-1.3 8.5-3.5l40-40c7.6-7.6 2.2-20.5-8.5-20.5H48C21.5 64 0 85.5 0 112v352c0 26.5 21.5 48 48 48h352c26.5 0 48-21.5 48-48V306.2c0-10.7-12.9-16-20.5-8.5l-40 40c-2.2 2.3-3.5 5.3-3.5 8.5z"/></svg>
<div class="abs dbtn" style="top:482px"><svg width="9.4" height="10" viewBox="0 80 352 352" style="position:absolute;left:12.8px;top:10.5px"><path fill="#fff" d="M242.72 256l100.07-100.07c12.28-12.28 12.28-32.19 0-44.48l-22.24-22.24c-12.28-12.28-32.19-12.28-44.48 0L176 189.28 75.93 89.21c-12.28-12.28-32.19-12.28-44.48 0L9.21 111.45c-12.28 12.28-12.28 32.19 0 44.48L109.28 256 9.21 356.07c-12.28 12.28-12.280 32.19 0 44.48l22.24 22.24c12.28 12.28 32.2 12.28 44.48 0L176 322.72l100.07 100.07c12.28 12.28 32.2 12.28 44.48 0l22.24-22.24c12.28-12.28 12.28-32.19 0-44.48L242.72 256z"/></svg></div>
<div class="abs" style="left:276px;top:518px;width:1253px;height:41px;background:#ffffff"></div>
<div class="td" style="left:275px;width:107px;top:529.38px"><span style="display:inline-block;transform:scaleX(1.0)">002</span></div>
<div class="td" style="left:382px;width:297px;top:529.38px"><span style="display:inline-block;transform:scaleX(0.88)">DAY HOSPITAL</span></div>
<div class="td" style="left:679px;width:107px;top:529.38px"><span style="display:inline-block;transform:scaleX(0.945)">A- Area Medica</span></div>
<div class="td" style="left:786px;width:63px;top:529.38px"><span style="display:inline-block;transform:scaleX(0.88)">OSP</span></div>
<div class="td" style="left:849px;width:64px;top:529.38px"><span style="display:inline-block;transform:scaleX(1.0)">02</span></div>
<svg class="abs" style="left:940.8px;top:533.5px" width="9.4" height="10" viewBox="0 80 352 352"><path fill="#212529" d="M242.72 256l100.07-100.07c12.28-12.28 12.28-32.19 0-44.48l-22.24-22.24c-12.28-12.28-32.19-12.28-44.48 0L176 189.28 75.93 89.21c-12.28-12.28-32.19-12.28-44.48 0L9.21 111.45c-12.28 12.28-12.28 32.19 0 44.48L109.28 256 9.21 356.07c-12.28 12.28-12.280 32.19 0 44.48l22.24 22.24c12.28 12.28 32.2 12.28 44.48 0L176 322.72l100.07 100.07c12.28 12.28 32.2 12.28 44.48 0l22.24-22.24c12.28-12.28 12.28-32.19 0-44.48L242.72 256z"/></svg><svg class="abs" style="left:1004.3px;top:533.5px" width="9.4" height="10" viewBox="0 80 352 352"><path fill="#212529" d="M242.72 256l100.07-100.07c12.28-12.28 12.28-32.19 0-44.48l-22.24-22.24c-12.28-12.28-32.19-12.28-44.48 0L176 189.28 75.93 89.21c-12.28-12.28-32.19-12.28-44.48 0L9.21 111.45c-12.28 12.28-12.28 32.19 0 44.48L109.28 256 9.21 356.07c-12.28 12.28-12.280 32.19 0 44.48l22.24 22.24c12.28 12.28 32.2 12.28 44.48 0L176 322.72l100.07 100.07c12.28 12.28 32.2 12.28 44.48 0l22.24-22.24c12.28-12.28 12.28-32.19 0-44.48L242.72 256z"/></svg><svg class="abs" style="left:1065.8px;top:533.2px" width="13.4" height="10.6" viewBox="0 60 512 392" preserveAspectRatio="none"><path fill="#212529" d="M173.898 439.404l-166.4-166.4c-9.997-9.997-9.997-26.206 0-36.204l36.203-36.204c9.997-9.998 26.207-9.998 36.204 0L192 312.69 432.095 72.596c9.997-9.997 26.207-9.997 36.204 0l36.203 36.204c9.997 9.997 9.997 26.206 0 36.204l-294.4 294.401c-9.998 9.997-26.207 9.997-36.204-.001z"/></svg><div class="td" style="left:1104px;width:128px;top:529.38px"><span style="display:inline-block;transform:scaleX(1.0)">22/11/2013</span></div>
<div class="td" style="left:1232px;width:127px;top:529.38px"><span style="display:inline-block;transform:scaleX(1.0)">12/10/2021</span></div>
<div class="abs ebtn" style="top:523px"></div>
<svg class="abs" style="left:1392px;top:532px" width="15.75" height="14" viewBox="0 0 576 512"><path fill="#fff" d="M402.6 83.2l90.2 90.2c3.8 3.8 3.8 10 0 13.8L274.4 405.6l-92.8 10.3c-12.4 1.4-22.9-9.1-21.5-21.5l10.3-92.8L388.8 83.2c3.8-3.8 10-3.8 13.8 0zm162-22.9l-48.8-48.8c-15.2-15.2-39.9-15.2-55.200 0l-35.4 35.4c-3.8 3.8-3.8 10 0 13.8l90.2 90.2c3.8 3.8 10 3.8 13.8 0l35.4-35.4c15.2-15.3 15.2-40 0-55.2zM384 346.2V448H64V128h229.8c3.2 0 6.2-1.3 8.5-3.5l40-40c7.6-7.6 2.2-20.5-8.5-20.5H48C21.5 64 0 85.5 0 112v352c0 26.5 21.5 48 48 48h352c26.5 0 48-21.5 48-48V306.2c0-10.7-12.9-16-20.5-8.5l-40 40c-2.2 2.3-3.5 5.3-3.5 8.5z"/></svg>
<div class="abs dbtn" style="top:523px"><svg width="9.4" height="10" viewBox="0 80 352 352" style="position:absolute;left:12.8px;top:10.5px"><path fill="#fff" d="M242.72 256l100.07-100.07c12.28-12.28 12.28-32.19 0-44.48l-22.24-22.24c-12.28-12.28-32.19-12.28-44.48 0L176 189.28 75.93 89.21c-12.28-12.28-32.19-12.28-44.48 0L9.21 111.45c-12.28 12.28-12.28 32.19 0 44.48L109.28 256 9.21 356.07c-12.28 12.28-12.280 32.19 0 44.48l22.24 22.24c12.28 12.28 32.2 12.28 44.48 0L176 322.72l100.07 100.07c12.28 12.28 32.2 12.28 44.48 0l22.24-22.24c12.28-12.28 12.28-32.19 0-44.48L242.72 256z"/></svg></div>
<div class="abs" style="left:276px;top:559px;width:1253px;height:50px;background:#f2f2f2"></div>
<div class="td" style="left:275px;width:107px;top:574.88px"><span style="display:inline-block;transform:scaleX(1.0)">003</span></div>
<div class="td" style="left:382px;width:297px;top:574.88px"><span style="display:inline-block;transform:scaleX(0.88)">ANATOMIA ED ISTOLOGIA PATOLOGICA</span></div>
<div class="td" style="left:679px;width:107px;top:564.75px"><span style="display:inline-block;transform:scaleX(0.945)">F- Area Servizi</span><br><span style="display:inline-block;transform:scaleX(0.945)">Diagnosi e Cura</span></div>
<div class="td" style="left:786px;width:63px;top:574.88px"><span style="display:inline-block;transform:scaleX(0.88)">OSP</span></div>
<div class="td" style="left:849px;width:64px;top:574.88px"><span style="display:inline-block;transform:scaleX(0.88)">S_03</span></div>
<svg class="abs" style="left:940.8px;top:579.0px" width="9.4" height="10" viewBox="0 80 352 352"><path fill="#212529" d="M242.72 256l100.07-100.07c12.28-12.28 12.28-32.19 0-44.48l-22.24-22.24c-12.28-12.28-32.19-12.28-44.48 0L176 189.28 75.93 89.21c-12.28-12.28-32.19-12.28-44.48 0L9.21 111.45c-12.28 12.28-12.28 32.19 0 44.48L109.28 256 9.21 356.07c-12.28 12.28-12.280 32.19 0 44.48l22.24 22.24c12.28 12.28 32.2 12.28 44.48 0L176 322.72l100.07 100.07c12.28 12.28 32.2 12.28 44.48 0l22.24-22.24c12.28-12.28 12.28-32.19 0-44.48L242.72 256z"/></svg><svg class="abs" style="left:1004.3px;top:579.0px" width="9.4" height="10" viewBox="0 80 352 352"><path fill="#212529" d="M242.72 256l100.07-100.07c12.28-12.28 12.28-32.19 0-44.48l-22.24-22.24c-12.28-12.28-32.19-12.28-44.48 0L176 189.28 75.93 89.21c-12.28-12.28-32.19-12.28-44.48 0L9.21 111.45c-12.28 12.28-12.28 32.19 0 44.48L109.28 256 9.21 356.07c-12.28 12.28-12.280 32.19 0 44.48l22.24 22.24c12.28 12.28 32.2 12.28 44.48 0L176 322.72l100.07 100.07c12.28 12.28 32.2 12.28 44.48 0l22.24-22.24c12.28-12.28 12.28-32.19 0-44.48L242.72 256z"/></svg><svg class="abs" style="left:1065.8px;top:578.7px" width="13.4" height="10.6" viewBox="0 60 512 392" preserveAspectRatio="none"><path fill="#212529" d="M173.898 439.404l-166.4-166.4c-9.997-9.997-9.997-26.206 0-36.204l36.203-36.204c9.997-9.998 26.207-9.998 36.204 0L192 312.69 432.095 72.596c9.997-9.997 26.207-9.997 36.204 0l36.203 36.204c9.997 9.997 9.997 26.206 0 36.204l-294.4 294.401c-9.998 9.997-26.207 9.997-36.204-.001z"/></svg><div class="td" style="left:1104px;width:128px;top:574.88px"><span style="display:inline-block;transform:scaleX(1.0)">21/12/2020</span></div>
<div class="td" style="left:1232px;width:127px;top:574.88px"><span style="display:inline-block;transform:scaleX(1.0)">13/10/2021</span></div>
<div class="abs ebtn" style="top:568px"></div>
<svg class="abs" style="left:1392px;top:577px" width="15.75" height="14" viewBox="0 0 576 512"><path fill="#fff" d="M402.6 83.2l90.2 90.2c3.8 3.8 3.8 10 0 13.8L274.4 405.6l-92.8 10.3c-12.4 1.4-22.9-9.1-21.5-21.5l10.3-92.8L388.8 83.2c3.8-3.8 10-3.8 13.8 0zm162-22.9l-48.8-48.8c-15.2-15.2-39.9-15.2-55.200 0l-35.4 35.4c-3.8 3.8-3.8 10 0 13.8l90.2 90.2c3.8 3.8 10 3.8 13.8 0l35.4-35.4c15.2-15.3 15.2-40 0-55.2zM384 346.2V448H64V128h229.8c3.2 0 6.2-1.3 8.5-3.5l40-40c7.6-7.6 2.2-20.5-8.5-20.5H48C21.5 64 0 85.5 0 112v352c0 26.5 21.5 48 48 48h352c26.5 0 48-21.5 48-48V306.2c0-10.7-12.9-16-20.5-8.5l-40 40c-2.2 2.3-3.5 5.3-3.5 8.5z"/></svg>
<div class="abs dbtn" style="top:568px"><svg width="9.4" height="10" viewBox="0 80 352 352" style="position:absolute;left:12.8px;top:10.5px"><path fill="#fff" d="M242.72 256l100.07-100.07c12.28-12.28 12.28-32.19 0-44.48l-22.24-22.24c-12.28-12.28-32.19-12.28-44.48 0L176 189.28 75.93 89.21c-12.28-12.28-32.19-12.28-44.48 0L9.21 111.45c-12.28 12.28-12.28 32.19 0 44.48L109.28 256 9.21 356.07c-12.28 12.28-12.280 32.19 0 44.48l22.24 22.24c12.28 12.28 32.2 12.28 44.48 0L176 322.72l100.07 100.07c12.28 12.28 32.2 12.28 44.48 0l22.24-22.24c12.28-12.28 12.28-32.19 0-44.48L242.72 256z"/></svg></div>
<div class="abs" style="left:276px;top:609px;width:1253px;height:41px;background:#ffffff"></div>
<div class="td" style="left:275px;width:107px;top:620.38px"><span style="display:inline-block;transform:scaleX(1.0)">005</span></div>
<div class="td" style="left:382px;width:297px;top:620.38px"><span style="display:inline-block;transform:scaleX(0.88)">ANGIOLOGIA</span></div>
<div class="td" style="left:679px;width:107px;top:620.38px"><span style="display:inline-block;transform:scaleX(0.945)">A- Area Medica</span></div>
<div class="td" style="left:786px;width:63px;top:620.38px"><span style="display:inline-block;transform:scaleX(0.88)">OSP</span></div>
<div class="td" style="left:849px;width:64px;top:620.38px"><span style="display:inline-block;transform:scaleX(1.0)">05</span></div>
<svg class="abs" style="left:940.8px;top:624.5px" width="9.4" height="10" viewBox="0 80 352 352"><path fill="#212529" d="M242.72 256l100.07-100.07c12.28-12.28 12.28-32.19 0-44.48l-22.24-22.24c-12.28-12.28-32.19-12.28-44.48 0L176 189.28 75.93 89.21c-12.28-12.28-32.19-12.28-44.48 0L9.21 111.45c-12.28 12.28-12.28 32.19 0 44.48L109.28 256 9.21 356.07c-12.28 12.28-12.280 32.19 0 44.48l22.24 22.24c12.28 12.28 32.2 12.28 44.48 0L176 322.72l100.07 100.07c12.28 12.28 32.2 12.28 44.48 0l22.24-22.24c12.28-12.28 12.28-32.19 0-44.48L242.72 256z"/></svg><svg class="abs" style="left:1002.3px;top:624.2px" width="13.4" height="10.6" viewBox="0 60 512 392" preserveAspectRatio="none"><path fill="#212529" d="M173.898 439.404l-166.4-166.4c-9.997-9.997-9.997-26.206 0-36.204l36.203-36.204c9.997-9.998 26.207-9.998 36.204 0L192 312.69 432.095 72.596c9.997-9.997 26.207-9.997 36.204 0l36.203 36.204c9.997 9.997 9.997 26.206 0 36.204l-294.4 294.401c-9.998 9.997-26.207 9.997-36.204-.001z"/></svg><svg class="abs" style="left:1065.8px;top:624.2px" width="13.4" height="10.6" viewBox="0 60 512 392" preserveAspectRatio="none"><path fill="#212529" d="M173.898 439.404l-166.4-166.4c-9.997-9.997-9.997-26.206 0-36.204l36.203-36.204c9.997-9.998 26.207-9.998 36.204 0L192 312.69 432.095 72.596c9.997-9.997 26.207-9.997 36.204 0l36.203 36.204c9.997 9.997 9.997 26.206 0 36.204l-294.4 294.401c-9.998 9.997-26.207 9.997-36.204-.001z"/></svg><div class="td" style="left:1104px;width:128px;top:620.38px"><span style="display:inline-block;transform:scaleX(1.0)">22/11/2013</span></div>
<div class="td" style="left:1232px;width:127px;top:620.38px"><span style="display:inline-block;transform:scaleX(1.0)">12/10/2021</span></div>
<div class="abs ebtn" style="top:614px"></div>
<svg class="abs" style="left:1392px;top:623px" width="15.75" height="14" viewBox="0 0 576 512"><path fill="#fff" d="M402.6 83.2l90.2 90.2c3.8 3.8 3.8 10 0 13.8L274.4 405.6l-92.8 10.3c-12.4 1.4-22.9-9.1-21.5-21.5l10.3-92.8L388.8 83.2c3.8-3.8 10-3.8 13.8 0zm162-22.9l-48.8-48.8c-15.2-15.2-39.9-15.2-55.200 0l-35.4 35.4c-3.8 3.8-3.8 10 0 13.8l90.2 90.2c3.8 3.8 10 3.8 13.8 0l35.4-35.4c15.2-15.3 15.2-40 0-55.2zM384 346.2V448H64V128h229.8c3.2 0 6.2-1.3 8.5-3.5l40-40c7.6-7.6 2.2-20.5-8.5-20.5H48C21.5 64 0 85.5 0 112v352c0 26.5 21.5 48 48 48h352c26.5 0 48-21.5 48-48V306.2c0-10.7-12.9-16-20.5-8.5l-40 40c-2.2 2.3-3.5 5.3-3.5 8.5z"/></svg>
<div class="abs dbtn" style="top:614px"><svg width="9.4" height="10" viewBox="0 80 352 352" style="position:absolute;left:12.8px;top:10.5px"><path fill="#fff" d="M242.72 256l100.07-100.07c12.28-12.28 12.28-32.19 0-44.48l-22.24-22.24c-12.28-12.28-32.19-12.28-44.48 0L176 189.28 75.93 89.21c-12.28-12.28-32.19-12.28-44.48 0L9.21 111.45c-12.28 12.28-12.28 32.19 0 44.48L109.28 256 9.21 356.07c-12.28 12.28-12.280 32.19 0 44.48l22.24 22.24c12.28 12.28 32.2 12.28 44.48 0L176 322.72l100.07 100.07c12.28 12.28 32.2 12.28 44.48 0l22.24-22.24c12.28-12.28 12.28-32.19 0-44.48L242.72 256z"/></svg></div>
<div class="abs" style="left:276px;top:650px;width:1253px;height:71px;background:#f2f2f2"></div>
<div class="td" style="left:275px;width:107px;top:676.38px"><span style="display:inline-block;transform:scaleX(1.0)">006</span></div>
<div class="td" style="left:382px;width:297px;top:676.38px"><span style="display:inline-block;transform:scaleX(0.88)">CARDIOCHIRURGIA PEDIATRICA</span></div>
<div class="td" style="left:679px;width:107px;top:656.12px"><span style="display:inline-block;transform:scaleX(0.945)">C- Area</span><br><span style="display:inline-block;transform:scaleX(0.945)">Materno</span><br><span style="display:inline-block;transform:scaleX(0.945)">Infantile</span></div>
<div class="td" style="left:786px;width:63px;top:676.38px"><span style="display:inline-block;transform:scaleX(0.88)">OSP</span></div>
<div class="td" style="left:849px;width:64px;top:676.38px"><span style="display:inline-block;transform:scaleX(1.0)">06</span></div>
<svg class="abs" style="left:940.8px;top:680.5px" width="9.4" height="10" viewBox="0 80 352 352"><path fill="#212529" d="M242.72 256l100.07-100.07c12.28-12.28 12.28-32.19 0-44.48l-22.24-22.24c-12.28-12.28-32.19-12.28-44.48 0L176 189.28 75.93 89.21c-12.28-12.28-32.19-12.28-44.48 0L9.21 111.45c-12.28 12.28-12.28 32.19 0 44.48L109.28 256 9.21 356.07c-12.28 12.28-12.280 32.19 0 44.48l22.24 22.24c12.28 12.28 32.2 12.28 44.48 0L176 322.72l100.07 100.07c12.28 12.28 32.2 12.28 44.48 0l22.24-22.24c12.28-12.28 12.28-32.19 0-44.48L242.72 256z"/></svg><svg class="abs" style="left:1002.3px;top:680.2px" width="13.4" height="10.6" viewBox="0 60 512 392" preserveAspectRatio="none"><path fill="#212529" d="M173.898 439.404l-166.4-166.4c-9.997-9.997-9.997-26.206 0-36.204l36.203-36.204c9.997-9.998 26.207-9.998 36.204 0L192 312.69 432.095 72.596c9.997-9.997 26.207-9.997 36.204 0l36.203 36.204c9.997 9.997 9.997 26.206 0 36.204l-294.4 294.401c-9.998 9.997-26.207 9.997-36.204-.001z"/></svg><svg class="abs" style="left:1065.8px;top:680.2px" width="13.4" height="10.6" viewBox="0 60 512 392" preserveAspectRatio="none"><path fill="#212529" d="M173.898 439.404l-166.4-166.4c-9.997-9.997-9.997-26.206 0-36.204l36.203-36.204c9.997-9.998 26.207-9.998 36.204 0L192 312.69 432.095 72.596c9.997-9.997 26.207-9.997 36.204 0l36.203 36.204c9.997 9.997 9.997 26.206 0 36.204l-294.4 294.401c-9.998 9.997-26.207 9.997-36.204-.001z"/></svg><div class="td" style="left:1104px;width:128px;top:676.38px"><span style="display:inline-block;transform:scaleX(1.0)">22/11/2013</span></div>
<div class="td" style="left:1232px;width:127px;top:676.38px"><span style="display:inline-block;transform:scaleX(1.0)">12/10/2021</span></div>
<div class="abs ebtn" style="top:670px"></div>
<svg class="abs" style="left:1392px;top:679px" width="15.75" height="14" viewBox="0 0 576 512"><path fill="#fff" d="M402.6 83.2l90.2 90.2c3.8 3.8 3.8 10 0 13.8L274.4 405.6l-92.8 10.3c-12.4 1.4-22.9-9.1-21.5-21.5l10.3-92.8L388.8 83.2c3.8-3.8 10-3.8 13.8 0zm162-22.9l-48.8-48.8c-15.2-15.2-39.9-15.2-55.200 0l-35.4 35.4c-3.8 3.8-3.8 10 0 13.8l90.2 90.2c3.8 3.8 10 3.8 13.8 0l35.4-35.4c15.2-15.3 15.2-40 0-55.2zM384 346.2V448H64V128h229.8c3.2 0 6.2-1.3 8.5-3.5l40-40c7.6-7.6 2.2-20.5-8.5-20.5H48C21.5 64 0 85.5 0 112v352c0 26.5 21.5 48 48 48h352c26.5 0 48-21.5 48-48V306.2c0-10.7-12.9-16-20.5-8.5l-40 40c-2.2 2.3-3.5 5.3-3.5 8.5z"/></svg>
<div class="abs dbtn" style="top:670px"><svg width="9.4" height="10" viewBox="0 80 352 352" style="position:absolute;left:12.8px;top:10.5px"><path fill="#fff" d="M242.72 256l100.07-100.07c12.28-12.28 12.28-32.19 0-44.48l-22.24-22.24c-12.28-12.28-32.19-12.28-44.48 0L176 189.28 75.93 89.21c-12.28-12.28-32.19-12.28-44.48 0L9.21 111.45c-12.28 12.28-12.28 32.19 0 44.48L109.28 256 9.21 356.07c-12.28 12.28-12.280 32.19 0 44.48l22.24 22.24c12.28 12.28 32.2 12.28 44.48 0L176 322.72l100.07 100.07c12.28 12.28 32.2 12.28 44.48 0l22.24-22.24c12.28-12.28 12.28-32.19 0-44.48L242.72 256z"/></svg></div>
<div class="abs" style="left:276px;top:721px;width:1253px;height:51px;background:#ffffff"></div>
<div class="td" style="left:275px;width:107px;top:737.38px"><span style="display:inline-block;transform:scaleX(1.0)">007</span></div>
<div class="td" style="left:382px;width:297px;top:737.38px"><span style="display:inline-block;transform:scaleX(0.88)">CARDIOCHIRURGIA</span></div>
<div class="td" style="left:679px;width:107px;top:727.25px"><span style="display:inline-block;transform:scaleX(0.945)">B- Area</span><br><span style="display:inline-block;transform:scaleX(0.945)">Chirurgica</span></div>
<div class="td" style="left:786px;width:63px;top:737.38px"><span style="display:inline-block;transform:scaleX(0.88)">OSP</span></div>
<div class="td" style="left:849px;width:64px;top:737.38px"><span style="display:inline-block;transform:scaleX(1.0)">07</span></div>
<svg class="abs" style="left:940.8px;top:741.5px" width="9.4" height="10" viewBox="0 80 352 352"><path fill="#212529" d="M242.72 256l100.07-100.07c12.28-12.28 12.28-32.19 0-44.48l-22.24-22.24c-12.28-12.28-32.19-12.28-44.48 0L176 189.28 75.93 89.21c-12.28-12.28-32.19-12.28-44.48 0L9.21 111.45c-12.28 12.28-12.28 32.19 0 44.48L109.28 256 9.21 356.07c-12.28 12.28-12.280 32.19 0 44.48l22.24 22.24c12.28 12.28 32.2 12.28 44.48 0L176 322.72l100.07 100.07c12.28 12.28 32.2 12.28 44.48 0l22.24-22.24c12.28-12.28 12.28-32.19 0-44.48L242.72 256z"/></svg><svg class="abs" style="left:1002.3px;top:741.2px" width="13.4" height="10.6" viewBox="0 60 512 392" preserveAspectRatio="none"><path fill="#212529" d="M173.898 439.404l-166.4-166.4c-9.997-9.997-9.997-26.206 0-36.204l36.203-36.204c9.997-9.998 26.207-9.998 36.204 0L192 312.69 432.095 72.596c9.997-9.997 26.207-9.997 36.204 0l36.203 36.204c9.997 9.997 9.997 26.206 0 36.204l-294.4 294.401c-9.998 9.997-26.207 9.997-36.204-.001z"/></svg><svg class="abs" style="left:1065.8px;top:741.2px" width="13.4" height="10.6" viewBox="0 60 512 392" preserveAspectRatio="none"><path fill="#212529" d="M173.898 439.404l-166.4-166.4c-9.997-9.997-9.997-26.206 0-36.204l36.203-36.204c9.997-9.998 26.207-9.998 36.204 0L192 312.69 432.095 72.596c9.997-9.997 26.207-9.997 36.204 0l36.203 36.204c9.997 9.997 9.997 26.206 0 36.204l-294.4 294.401c-9.998 9.997-26.207 9.997-36.204-.001z"/></svg><div class="td" style="left:1104px;width:128px;top:737.38px"><span style="display:inline-block;transform:scaleX(1.0)">22/11/2013</span></div>
<div class="td" style="left:1232px;width:127px;top:737.38px"><span style="display:inline-block;transform:scaleX(1.0)">12/10/2021</span></div>
<div class="abs ebtn" style="top:731px"></div>
<svg class="abs" style="left:1392px;top:740px" width="15.75" height="14" viewBox="0 0 576 512"><path fill="#fff" d="M402.6 83.2l90.2 90.2c3.8 3.8 3.8 10 0 13.8L274.4 405.6l-92.8 10.3c-12.4 1.4-22.9-9.1-21.5-21.5l10.3-92.8L388.8 83.2c3.8-3.8 10-3.8 13.8 0zm162-22.9l-48.8-48.8c-15.2-15.2-39.9-15.2-55.200 0l-35.4 35.4c-3.8 3.8-3.8 10 0 13.8l90.2 90.2c3.8 3.8 10 3.8 13.8 0l35.4-35.4c15.2-15.3 15.2-40 0-55.2zM384 346.2V448H64V128h229.8c3.2 0 6.2-1.3 8.5-3.5l40-40c7.6-7.6 2.2-20.5-8.5-20.5H48C21.5 64 0 85.5 0 112v352c0 26.5 21.5 48 48 48h352c26.5 0 48-21.5 48-48V306.2c0-10.7-12.9-16-20.5-8.5l-40 40c-2.2 2.3-3.5 5.3-3.5 8.5z"/></svg>
<div class="abs dbtn" style="top:731px"><svg width="9.4" height="10" viewBox="0 80 352 352" style="position:absolute;left:12.8px;top:10.5px"><path fill="#fff" d="M242.72 256l100.07-100.07c12.28-12.28 12.28-32.19 0-44.48l-22.24-22.24c-12.28-12.28-32.19-12.28-44.48 0L176 189.28 75.93 89.21c-12.28-12.28-32.19-12.28-44.48 0L9.21 111.45c-12.28 12.28-12.28 32.19 0 44.48L109.28 256 9.21 356.07c-12.28 12.28-12.280 32.19 0 44.48l22.24 22.24c12.28 12.28 32.2 12.28 44.48 0L176 322.72l100.07 100.07c12.28 12.28 32.2 12.28 44.48 0l22.24-22.24c12.28-12.28 12.28-32.19 0-44.48L242.72 256z"/></svg></div>
<div class="abs" style="left:276px;top:772px;width:1253px;height:41px;background:#f2f2f2"></div>
<div class="td" style="left:275px;width:107px;top:783.38px"><span style="display:inline-block;transform:scaleX(1.0)">008</span></div>
<div class="td" style="left:382px;width:297px;top:783.38px"><span style="display:inline-block;transform:scaleX(0.88)">CARDIOLOGIA</span></div>
<div class="td" style="left:679px;width:107px;top:783.38px"><span style="display:inline-block;transform:scaleX(0.945)">A- Area Medica</span></div>
<div class="td" style="left:786px;width:63px;top:783.38px"><span style="display:inline-block;transform:scaleX(0.88)">OSP</span></div>
<div class="td" style="left:849px;width:64px;top:783.38px"><span style="display:inline-block;transform:scaleX(1.0)">08</span></div>
<svg class="abs" style="left:940.8px;top:787.5px" width="9.4" height="10" viewBox="0 80 352 352"><path fill="#212529" d="M242.72 256l100.07-100.07c12.28-12.28 12.28-32.19 0-44.48l-22.24-22.24c-12.28-12.28-32.19-12.28-44.48 0L176 189.28 75.93 89.21c-12.28-12.28-32.19-12.28-44.48 0L9.21 111.45c-12.28 12.28-12.28 32.19 0 44.48L109.28 256 9.21 356.07c-12.28 12.28-12.280 32.19 0 44.48l22.24 22.24c12.28 12.28 32.2 12.28 44.48 0L176 322.72l100.07 100.07c12.28 12.28 32.2 12.28 44.48 0l22.24-22.24c12.28-12.28 12.28-32.19 0-44.48L242.72 256z"/></svg><svg class="abs" style="left:1002.3px;top:787.2px" width="13.4" height="10.6" viewBox="0 60 512 392" preserveAspectRatio="none"><path fill="#212529" d="M173.898 439.404l-166.4-166.4c-9.997-9.997-9.997-26.206 0-36.204l36.203-36.204c9.997-9.998 26.207-9.998 36.204 0L192 312.69 432.095 72.596c9.997-9.997 26.207-9.997 36.204 0l36.203 36.204c9.997 9.997 9.997 26.206 0 36.204l-294.4 294.401c-9.998 9.997-26.207 9.997-36.204-.001z"/></svg><svg class="abs" style="left:1065.8px;top:787.2px" width="13.4" height="10.6" viewBox="0 60 512 392" preserveAspectRatio="none"><path fill="#212529" d="M173.898 439.404l-166.4-166.4c-9.997-9.997-9.997-26.206 0-36.204l36.203-36.204c9.997-9.998 26.207-9.998 36.204 0L192 312.69 432.095 72.596c9.997-9.997 26.207-9.997 36.204 0l36.203 36.204c9.997 9.997 9.997 26.206 0 36.204l-294.4 294.401c-9.998 9.997-26.207 9.997-36.204-.001z"/></svg><div class="td" style="left:1104px;width:128px;top:783.38px"><span style="display:inline-block;transform:scaleX(1.0)">22/11/2013</span></div>
<div class="td" style="left:1232px;width:127px;top:783.38px"><span style="display:inline-block;transform:scaleX(1.0)">12/10/2021</span></div>
<div class="abs ebtn" style="top:777px"></div>
<svg class="abs" style="left:1392px;top:786px" width="15.75" height="14" viewBox="0 0 576 512"><path fill="#fff" d="M402.6 83.2l90.2 90.2c3.8 3.8 3.8 10 0 13.8L274.4 405.6l-92.8 10.3c-12.4 1.4-22.9-9.1-21.5-21.5l10.3-92.8L388.8 83.2c3.8-3.8 10-3.8 13.8 0zm162-22.9l-48.8-48.8c-15.2-15.2-39.9-15.2-55.200 0l-35.4 35.4c-3.8 3.8-3.8 10 0 13.8l90.2 90.2c3.8 3.8 10 3.8 13.8 0l35.4-35.4c15.2-15.3 15.2-40 0-55.2zM384 346.2V448H64V128h229.8c3.2 0 6.2-1.3 8.5-3.5l40-40c7.6-7.6 2.2-20.5-8.5-20.5H48C21.5 64 0 85.5 0 112v352c0 26.5 21.5 48 48 48h352c26.5 0 48-21.5 48-48V306.2c0-10.7-12.9-16-20.5-8.5l-40 40c-2.2 2.3-3.5 5.3-3.5 8.5z"/></svg>
<div class="abs dbtn" style="top:777px"><svg width="9.4" height="10" viewBox="0 80 352 352" style="position:absolute;left:12.8px;top:10.5px"><path fill="#fff" d="M242.72 256l100.07-100.07c12.28-12.28 12.28-32.19 0-44.48l-22.24-22.24c-12.28-12.28-32.19-12.28-44.48 0L176 189.28 75.93 89.21c-12.28-12.28-32.19-12.28-44.48 0L9.21 111.45c-12.28 12.28-12.28 32.19 0 44.48L109.28 256 9.21 356.07c-12.28 12.28-12.280 32.19 0 44.48l22.24 22.24c12.28 12.28 32.2 12.28 44.48 0L176 322.72l100.07 100.07c12.28 12.28 32.2 12.28 44.48 0l22.24-22.24c12.28-12.28 12.28-32.19 0-44.48L242.72 256z"/></svg></div>
<div class="abs" style="left:276px;top:813px;width:1253px;height:50px;background:#ffffff"></div>
<div class="td" style="left:275px;width:107px;top:828.88px"><span style="display:inline-block;transform:scaleX(1.0)">009</span></div>
<div class="td" style="left:382px;width:297px;top:828.88px"><span style="display:inline-block;transform:scaleX(0.88)">CHIRURGIA GENERALE</span></div>
<div class="td" style="left:679px;width:107px;top:818.75px"><span style="display:inline-block;transform:scaleX(0.945)">B- Area</span><br><span style="display:inline-block;transform:scaleX(0.945)">Chirurgica</span></div>
<div class="td" style="left:786px;width:63px;top:828.88px"><span style="display:inline-block;transform:scaleX(0.88)">OSP</span></div>
<div class="td" style="left:849px;width:64px;top:828.88px"><span style="display:inline-block;transform:scaleX(1.0)">09</span></div>
<svg class="abs" style="left:940.8px;top:833.0px" width="9.4" height="10" viewBox="0 80 352 352"><path fill="#212529" d="M242.72 256l100.07-100.07c12.28-12.28 12.28-32.19 0-44.48l-22.24-22.24c-12.28-12.28-32.19-12.28-44.48 0L176 189.28 75.93 89.21c-12.28-12.28-32.19-12.28-44.48 0L9.21 111.45c-12.28 12.28-12.28 32.19 0 44.48L109.28 256 9.21 356.07c-12.28 12.28-12.280 32.19 0 44.48l22.24 22.24c12.28 12.28 32.2 12.28 44.48 0L176 322.72l100.07 100.07c12.28 12.28 32.2 12.28 44.48 0l22.24-22.24c12.28-12.28 12.28-32.19 0-44.48L242.72 256z"/></svg><svg class="abs" style="left:1002.3px;top:832.7px" width="13.4" height="10.6" viewBox="0 60 512 392" preserveAspectRatio="none"><path fill="#212529" d="M173.898 439.404l-166.4-166.4c-9.997-9.997-9.997-26.206 0-36.204l36.203-36.204c9.997-9.998 26.207-9.998 36.204 0L192 312.69 432.095 72.596c9.997-9.997 26.207-9.997 36.204 0l36.203 36.204c9.997 9.997 9.997 26.206 0 36.204l-294.4 294.401c-9.998 9.997-26.207 9.997-36.204-.001z"/></svg><svg class="abs" style="left:1065.8px;top:832.7px" width="13.4" height="10.6" viewBox="0 60 512 392" preserveAspectRatio="none"><path fill="#212529" d="M173.898 439.404l-166.4-166.4c-9.997-9.997-9.997-26.206 0-36.204l36.203-36.204c9.997-9.998 26.207-9.998 36.204 0L192 312.69 432.095 72.596c9.997-9.997 26.207-9.997 36.204 0l36.203 36.204c9.997 9.997 9.997 26.206 0 36.204l-294.4 294.401c-9.998 9.997-26.207 9.997-36.204-.001z"/></svg><div class="td" style="left:1104px;width:128px;top:828.88px"><span style="display:inline-block;transform:scaleX(1.0)">22/11/2013</span></div>
<div class="td" style="left:1232px;width:127px;top:828.88px"><span style="display:inline-block;transform:scaleX(1.0)">12/10/2021</span></div>
<div class="abs ebtn" style="top:822px"></div>
<svg class="abs" style="left:1392px;top:831px" width="15.75" height="14" viewBox="0 0 576 512"><path fill="#fff" d="M402.6 83.2l90.2 90.2c3.8 3.8 3.8 10 0 13.8L274.4 405.6l-92.8 10.3c-12.4 1.4-22.9-9.1-21.5-21.5l10.3-92.8L388.8 83.2c3.8-3.8 10-3.8 13.8 0zm162-22.9l-48.8-48.8c-15.2-15.2-39.9-15.2-55.200 0l-35.4 35.4c-3.8 3.8-3.8 10 0 13.8l90.2 90.2c3.8 3.8 10 3.8 13.8 0l35.4-35.4c15.2-15.3 15.2-40 0-55.2zM384 346.2V448H64V128h229.8c3.2 0 6.2-1.3 8.5-3.5l40-40c7.6-7.6 2.2-20.5-8.5-20.5H48C21.5 64 0 85.5 0 112v352c0 26.5 21.5 48 48 48h352c26.5 0 48-21.5 48-48V306.2c0-10.7-12.9-16-20.5-8.5l-40 40c-2.2 2.3-3.5 5.3-3.5 8.5z"/></svg>
<div class="abs dbtn" style="top:822px"><svg width="9.4" height="10" viewBox="0 80 352 352" style="position:absolute;left:12.8px;top:10.5px"><path fill="#fff" d="M242.72 256l100.07-100.07c12.28-12.28 12.28-32.19 0-44.48l-22.24-22.24c-12.28-12.28-32.19-12.28-44.48 0L176 189.28 75.93 89.21c-12.28-12.28-32.19-12.28-44.48 0L9.21 111.45c-12.28 12.28-12.28 32.19 0 44.48L109.28 256 9.21 356.07c-12.28 12.28-12.280 32.19 0 44.48l22.24 22.24c12.28 12.28 32.2 12.28 44.48 0L176 322.72l100.07 100.07c12.28 12.28 32.2 12.28 44.48 0l22.24-22.24c12.28-12.28 12.28-32.19 0-44.48L242.72 256z"/></svg></div>
<div class="abs" style="left:276px;top:863px;width:1253px;height:50px;background:#f2f2f2"></div>
<div class="td" style="left:275px;width:107px;top:878.88px"><span style="display:inline-block;transform:scaleX(1.0)">009</span></div>
<div class="td" style="left:382px;width:297px;top:878.88px"><span style="display:inline-block;transform:scaleX(0.88)">CHIRURGIA SENOLOGICA</span></div>
<div class="td" style="left:679px;width:107px;top:868.75px"><span style="display:inline-block;transform:scaleX(0.945)">B- Area</span><br><span style="display:inline-block;transform:scaleX(0.945)">Chirurgica</span></div>
<div class="td" style="left:786px;width:63px;top:878.88px"><span style="display:inline-block;transform:scaleX(0.88)">OSP</span></div>
<div class="td" style="left:849px;width:64px;top:878.88px"><span style="display:inline-block;transform:scaleX(1.0)">09:</span></div>
<svg class="abs" style="left:940.8px;top:883.0px" width="9.4" height="10" viewBox="0 80 352 352"><path fill="#212529" d="M242.72 256l100.07-100.07c12.28-12.28 12.28-32.19 0-44.48l-22.24-22.24c-12.28-12.28-32.19-12.28-44.48 0L176 189.28 75.93 89.21c-12.28-12.28-32.19-12.28-44.48 0L9.21 111.45c-12.28 12.28-12.28 32.19 0 44.48L109.28 256 9.21 356.07c-12.28 12.28-12.280 32.19 0 44.48l22.24 22.24c12.28 12.28 32.2 12.28 44.48 0L176 322.72l100.07 100.07c12.28 12.28 32.2 12.28 44.48 0l22.24-22.24c12.28-12.28 12.28-32.19 0-44.48L242.72 256z"/></svg><svg class="abs" style="left:1004.3px;top:883.0px" width="9.4" height="10" viewBox="0 80 352 352"><path fill="#212529" d="M242.72 256l100.07-100.07c12.28-12.28 12.28-32.19 0-44.48l-22.24-22.24c-12.28-12.28-32.19-12.28-44.48 0L176 189.28 75.93 89.21c-12.28-12.28-32.19-12.28-44.48 0L9.21 111.45c-12.28 12.28-12.28 32.19 0 44.48L109.28 256 9.21 356.07c-12.28 12.28-12.280 32.19 0 44.48l22.24 22.24c12.28 12.28 32.2 12.28 44.48 0L176 322.72l100.07 100.07c12.28 12.28 32.2 12.28 44.48 0l22.24-22.24c12.28-12.28 12.28-32.19 0-44.48L242.72 256z"/></svg><svg class="abs" style="left:1065.8px;top:882.7px" width="13.4" height="10.6" viewBox="0 60 512 392" preserveAspectRatio="none"><path fill="#212529" d="M173.898 439.404l-166.4-166.4c-9.997-9.997-9.997-26.206 0-36.204l36.203-36.204c9.997-9.998 26.207-9.998 36.204 0L192 312.69 432.095 72.596c9.997-9.997 26.207-9.997 36.204 0l36.203 36.204c9.997 9.997 9.997 26.206 0 36.204l-294.4 294.401c-9.998 9.997-26.207 9.997-36.204-.001z"/></svg><div class="td" style="left:1104px;width:128px;top:878.88px"><span style="display:inline-block;transform:scaleX(1.0)">04/10/2021</span></div>
<div class="td" style="left:1232px;width:127px;top:878.88px"><span style="display:inline-block;transform:scaleX(1.0)">12/10/2021</span></div>
<div class="abs ebtn" style="top:872px"></div>
<svg class="abs" style="left:1392px;top:881px" width="15.75" height="14" viewBox="0 0 576 512"><path fill="#fff" d="M402.6 83.2l90.2 90.2c3.8 3.8 3.8 10 0 13.8L274.4 405.6l-92.8 10.3c-12.4 1.4-22.9-9.1-21.5-21.5l10.3-92.8L388.8 83.2c3.8-3.8 10-3.8 13.8 0zm162-22.9l-48.8-48.8c-15.2-15.2-39.9-15.2-55.200 0l-35.4 35.4c-3.8 3.8-3.8 10 0 13.8l90.2 90.2c3.8 3.8 10 3.8 13.8 0l35.4-35.4c15.2-15.3 15.2-40 0-55.2zM384 346.2V448H64V128h229.8c3.2 0 6.2-1.3 8.5-3.5l40-40c7.6-7.6 2.2-20.5-8.5-20.5H48C21.5 64 0 85.5 0 112v352c0 26.5 21.5 48 48 48h352c26.5 0 48-21.5 48-48V306.2c0-10.7-12.9-16-20.5-8.5l-40 40c-2.2 2.3-3.5 5.3-3.5 8.5z"/></svg>
<div class="abs dbtn" style="top:872px"><svg width="9.4" height="10" viewBox="0 80 352 352" style="position:absolute;left:12.8px;top:10.5px"><path fill="#fff" d="M242.72 256l100.07-100.07c12.28-12.28 12.28-32.19 0-44.48l-22.24-22.24c-12.28-12.28-32.19-12.28-44.48 0L176 189.28 75.93 89.21c-12.28-12.28-32.19-12.28-44.48 0L9.21 111.45c-12.28 12.28-12.28 32.19 0 44.48L109.28 256 9.21 356.07c-12.28 12.28-12.280 32.19 0 44.48l22.24 22.24c12.28 12.28 32.2 12.28 44.48 0L176 322.72l100.07 100.07c12.28 12.28 32.2 12.28 44.48 0l22.24-22.24c12.28-12.28 12.28-32.19 0-44.48L242.72 256z"/></svg></div>
<div class="abs" style="left:276px;top:913px;width:1253px;height:51px;background:#ffffff"></div>
<div class="td" style="left:275px;width:107px;top:929.38px"><span style="display:inline-block;transform:scaleX(1.0)">009</span></div>
<div class="td" style="left:382px;width:297px;top:929.38px"><span style="display:inline-block;transform:scaleX(0.88)">CHIRURGIA DEI TRAPIANTI</span></div>
<div class="td" style="left:679px;width:107px;top:919.25px"><span style="display:inline-block;transform:scaleX(0.945)">B- Area</span><br><span style="display:inline-block;transform:scaleX(0.945)">Chirurgica</span></div>
<div class="td" style="left:786px;width:63px;top:929.38px"><span style="display:inline-block;transform:scaleX(0.88)">OSP</span></div>
<div class="td" style="left:849px;width:64px;top:929.38px"><span style="display:inline-block;transform:scaleX(1.0)">09_</span></div>
<svg class="abs" style="left:940.8px;top:933.5px" width="9.4" height="10" viewBox="0 80 352 352"><path fill="#212529" d="M242.72 256l100.07-100.07c12.28-12.28 12.28-32.19 0-44.48l-22.24-22.24c-12.28-12.28-32.19-12.28-44.48 0L176 189.28 75.93 89.21c-12.28-12.28-32.19-12.28-44.48 0L9.21 111.45c-12.28 12.28-12.28 32.19 0 44.48L109.28 256 9.21 356.07c-12.28 12.28-12.280 32.19 0 44.48l22.24 22.24c12.28 12.28 32.2 12.28 44.48 0L176 322.72l100.07 100.07c12.28 12.28 32.2 12.28 44.48 0l22.24-22.24c12.28-12.28 12.28-32.19 0-44.48L242.72 256z"/></svg><svg class="abs" style="left:1004.3px;top:933.5px" width="9.4" height="10" viewBox="0 80 352 352"><path fill="#212529" d="M242.72 256l100.07-100.07c12.28-12.28 12.28-32.19 0-44.48l-22.24-22.24c-12.28-12.28-32.19-12.28-44.48 0L176 189.28 75.93 89.21c-12.28-12.28-32.19-12.28-44.48 0L9.21 111.45c-12.28 12.28-12.28 32.19 0 44.48L109.28 256 9.21 356.07c-12.28 12.28-12.280 32.19 0 44.48l22.24 22.24c12.28 12.28 32.2 12.28 44.48 0L176 322.72l100.07 100.07c12.28 12.28 32.2 12.28 44.48 0l22.24-22.24c12.28-12.28 12.28-32.19 0-44.48L242.72 256z"/></svg><svg class="abs" style="left:1065.8px;top:933.2px" width="13.4" height="10.6" viewBox="0 60 512 392" preserveAspectRatio="none"><path fill="#212529" d="M173.898 439.404l-166.4-166.4c-9.997-9.997-9.997-26.206 0-36.204l36.203-36.204c9.997-9.998 26.207-9.998 36.204 0L192 312.69 432.095 72.596c9.997-9.997 26.207-9.997 36.204 0l36.203 36.204c9.997 9.997 9.997 26.206 0 36.204l-294.4 294.401c-9.998 9.997-26.207 9.997-36.204-.001z"/></svg><div class="td" style="left:1104px;width:128px;top:929.38px"><span style="display:inline-block;transform:scaleX(1.0)">08/10/2021</span></div>
<div class="td" style="left:1232px;width:127px;top:929.38px"><span style="display:inline-block;transform:scaleX(1.0)">12/10/2021</span></div>
<div class="abs ebtn" style="top:923px"></div>
<svg class="abs" style="left:1392px;top:932px" width="15.75" height="14" viewBox="0 0 576 512"><path fill="#fff" d="M402.6 83.2l90.2 90.2c3.8 3.8 3.8 10 0 13.8L274.4 405.6l-92.8 10.3c-12.4 1.4-22.9-9.1-21.5-21.5l10.3-92.8L388.8 83.2c3.8-3.8 10-3.8 13.8 0zm162-22.9l-48.8-48.8c-15.2-15.2-39.9-15.2-55.200 0l-35.4 35.4c-3.8 3.8-3.8 10 0 13.8l90.2 90.2c3.8 3.8 10 3.8 13.8 0l35.4-35.4c15.2-15.3 15.2-40 0-55.2zM384 346.2V448H64V128h229.8c3.2 0 6.2-1.3 8.5-3.5l40-40c7.6-7.6 2.2-20.5-8.5-20.5H48C21.5 64 0 85.5 0 112v352c0 26.5 21.5 48 48 48h352c26.5 0 48-21.5 48-48V306.2c0-10.7-12.9-16-20.5-8.5l-40 40c-2.2 2.3-3.5 5.3-3.5 8.5z"/></svg>
<div class="abs dbtn" style="top:923px"><svg width="9.4" height="10" viewBox="0 80 352 352" style="position:absolute;left:12.8px;top:10.5px"><path fill="#fff" d="M242.72 256l100.07-100.07c12.28-12.28 12.28-32.19 0-44.48l-22.24-22.24c-12.28-12.28-32.19-12.28-44.48 0L176 189.28 75.93 89.21c-12.28-12.28-32.19-12.28-44.48 0L9.21 111.45c-12.28 12.28-12.28 32.19 0 44.48L109.28 256 9.21 356.07c-12.28 12.28-12.280 32.19 0 44.48l22.24 22.24c12.28 12.28 32.2 12.28 44.48 0L176 322.72l100.07 100.07c12.28 12.28 32.2 12.28 44.48 0l22.24-22.24c12.28-12.28 12.28-32.19 0-44.48L242.72 256z"/></svg></div>
<div class="abs" style="left:275px;top:436px;width:1px;height:520px;background:#e3e3e3"></div>
<div class="abs" style="left:382px;top:436px;width:1px;height:520px;background:#e3e3e3"></div>
<div class="abs" style="left:679px;top:436px;width:1px;height:520px;background:#e3e3e3"></div>
<div class="abs" style="left:786px;top:436px;width:1px;height:520px;background:#e3e3e3"></div>
<div class="abs" style="left:849px;top:436px;width:1px;height:520px;background:#e3e3e3"></div>
<div class="abs" style="left:913px;top:436px;width:1px;height:520px;background:#e3e3e3"></div>
<div class="abs" style="left:977px;top:436px;width:1px;height:520px;background:#e3e3e3"></div>
<div class="abs" style="left:1040px;top:436px;width:1px;height:520px;background:#e3e3e3"></div>
<div class="abs" style="left:1104px;top:436px;width:1px;height:520px;background:#e3e3e3"></div>
<div class="abs" style="left:1232px;top:436px;width:1px;height:520px;background:#e3e3e3"></div>
<div class="abs" style="left:1359px;top:436px;width:1px;height:520px;background:#e3e3e3"></div>
<div class="abs" style="left:1444px;top:436px;width:1px;height:520px;background:#e3e3e3"></div>
</body></html>
